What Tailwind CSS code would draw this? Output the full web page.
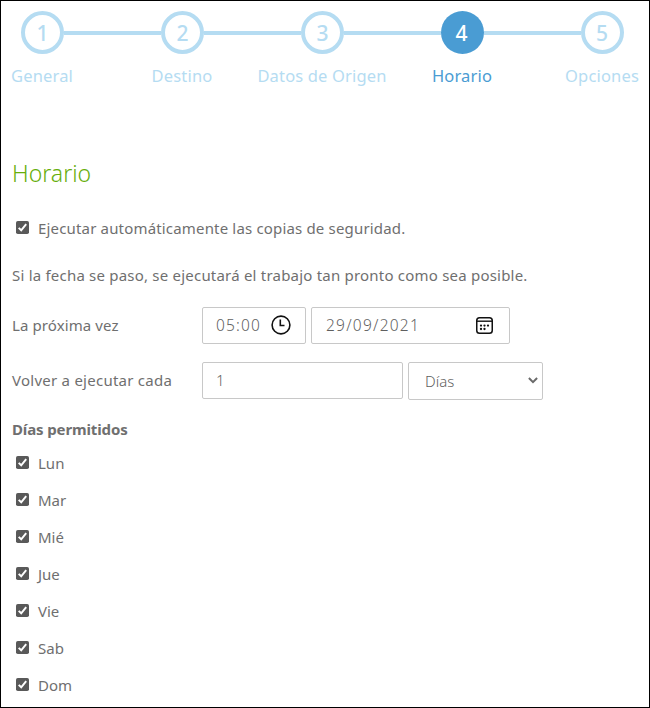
<!DOCTYPE html>
<html lang="es">
<head>
<meta charset="utf-8">
<title>Horario</title>
<script src="https://cdn.jsdelivr.net/npm/@tailwindcss/browser@4"></script>
</head>
<body class="bg-white">
<main class="w-[650px] h-[708px] border border-black overflow-hidden font-['Noto_Sans',sans-serif] text-[15px] leading-[20px] text-[#6f6f6f]">
  <nav class="flex pl-5 pr-[25px] pt-[10px] h-[148px] text-[#b5dcf2]">
    <div class="w-[43px] flex flex-col items-center">
      <div class="size-[43px] shrink-0 rounded-full border-4 border-current flex items-center justify-center text-[21px] font-medium">1</div>
      <span class="mt-[12px] mr-px whitespace-nowrap text-[16.5px] tracking-[0.16px]">General</span>
    </div>
    <div class="flex-1 h-1 mt-5 bg-[#b5dcf2]"></div>
    <div class="w-[43px] flex flex-col items-center">
      <div class="size-[43px] shrink-0 rounded-full border-4 border-current flex items-center justify-center text-[21px] font-medium">2</div>
      <span class="mt-[12px] mr-px whitespace-nowrap text-[16.5px] tracking-[0.16px]">Destino</span>
    </div>
    <div class="flex-1 h-1 mt-5 bg-[#b5dcf2]"></div>
    <div class="w-[43px] flex flex-col items-center">
      <div class="size-[43px] shrink-0 rounded-full border-4 border-current flex items-center justify-center text-[21px] font-medium">3</div>
      <span class="mt-[12px] mr-px whitespace-nowrap text-[16.5px] tracking-[0.16px]">Datos de Origen</span>
    </div>
    <div class="flex-1 h-1 mt-5 bg-[#b5dcf2]"></div>
    <div class="w-[43px] flex flex-col items-center text-[#4a9cd3]">
      <div class="size-[43px] shrink-0 rounded-full bg-[#4a9cd3] text-white flex items-center justify-center pr-[2px] text-[21px] font-medium">4</div>
      <span class="mt-[12px] mr-px whitespace-nowrap text-[16.5px] tracking-[0.16px]">Horario</span>
    </div>
    <div class="flex-1 h-1 mt-5 bg-[#b5dcf2]"></div>
    <div class="w-[43px] flex flex-col items-center">
      <div class="size-[43px] shrink-0 rounded-full border-4 border-current flex items-center justify-center pr-px text-[21px] font-medium">5</div>
      <span class="mt-[12px] mr-px whitespace-nowrap text-[16.5px] tracking-[0.16px]">Opciones</span>
    </div>
  </nav>

  <section class="pl-[11px]">
    <h1 class="h-[48px] flex items-center text-[23px] font-light text-[#67ae0b]"><span>Horario</span></h1>
    <label class="flex items-center h-[20px] mt-[21px] pl-1 gap-[9px]">
      <svg class="size-[13px] shrink-0 -mt-px" viewBox="0 0 13 13"><rect width="13" height="13" rx="1.8" fill="#595959"/><path d="M2.7 6.9 5.2 9.3 10.2 3.2" fill="none" stroke="#fff" stroke-width="2"/></svg>
      <span class="whitespace-nowrap tracking-[0.17px]">Ejecutar automáticamente las copias de seguridad.</span>
    </label>
    <p class="mt-[27px] whitespace-nowrap tracking-[0.21px]"><span>Si la fecha se paso, se ejecutará el trabajo tan pronto como sea posible.</span></p>

    <div class="flex items-center mt-[22px] h-[37px]">
      <div class="w-[190px] pb-[2px] tracking-[0.1px]"><span>La próxima vez</span></div>
      <div class="w-[104px] h-[37px] border border-[#c8c8c8] rounded-[2px] flex items-center justify-between pl-[13px] pr-[14px] pb-px font-light text-[#5f5f5f]">
        <span class="text-[15.5px] tracking-[1.15px]">05:00</span>
        <svg class="size-5" viewBox="0 0 20 20" fill="none" stroke="#111"><circle cx="10" cy="10" r="8.9" stroke-width="1.6"/><path d="M9.3 4.5v6h4.2" stroke-width="1.6"/></svg>
      </div>
      <div class="ml-[5px] w-[199px] h-[37px] border border-[#c8c8c8] rounded-[2px] flex items-center justify-between pl-[14px] pr-[16px] pb-px font-light text-[#5f5f5f]">
        <span class="text-[15.5px] tracking-[1.25px]">29/09/2021</span>
        <svg class="w-[17px] h-[17px]" viewBox="0 0 17 17" fill="none" stroke="#111"><rect x=".75" y=".75" width="15.5" height="15.5" rx="2.8" stroke-width="1.5"/><path d="M1 4.2h15" stroke-width="1.4"/><g fill="#111" stroke="none"><circle cx="8.5" cy="8.6" r="1.15"/><circle cx="12" cy="8.6" r="1.15"/><circle cx="5" cy="8.6" r="1.15"/><circle cx="5" cy="12" r="1.15"/><circle cx="8.5" cy="12" r="1.15"/></g></svg>
      </div>
    </div>

    <div class="flex items-start mt-[18px] h-[38px]">
      <div class="w-[190px] pt-[8px] tracking-[0.25px]"><span>Volver a ejecutar cada</span></div>
      <div class="w-[201px] h-[37px] border border-[#c8c8c8] rounded-[2px] flex items-center pl-[13px] pb-px font-light text-[#5f5f5f]"><span>1</span></div>
      <div class="ml-[5px] w-[135px] h-[38px] border border-[#c8c8c8] rounded-[2px] flex items-center justify-between pl-4 pr-1 pb-px font-light text-[#5f5f5f]">
        <span>Días</span>
        <svg class="w-[10px] h-[7px]" viewBox="0 0 10 7"><path d="M.9 1 5 5.1 9.1 1" fill="none" stroke="#6a6a6a" stroke-width="2"/></svg>
      </div>
    </div>

    <h2 class="mt-[19px] font-bold tracking-[-0.13px]"><span>Días permitidos</span></h2>
    <ul class="mt-[14px] flex flex-col gap-[17px]" id="days"></ul>
  </section>
</main>
<script>
  document.getElementById('days').innerHTML = ['Lun', 'Mar', 'Mié', 'Jue', 'Vie', 'Sab', 'Dom'].map(d => `
    <li><label class="flex items-center h-[20px] pl-1 gap-[9px]">
      <svg class="size-[13px] shrink-0 -mt-[2px]" viewBox="0 0 13 13"><rect width="13" height="13" rx="1.8" fill="#595959"/><path d="M2.7 6.9 5.2 9.3 10.2 3.2" fill="none" stroke="#fff" stroke-width="2"/></svg>
      <span>${d}</span></label></li>`).join('');
</script>
</body>
</html>
